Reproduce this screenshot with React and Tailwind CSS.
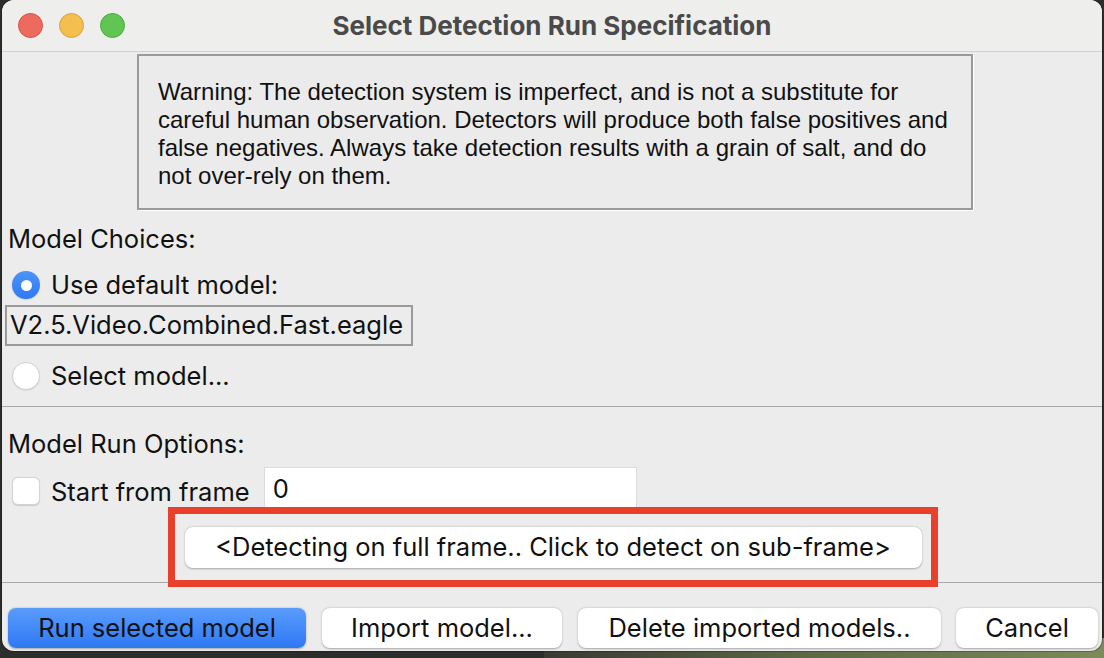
import React from "react";

const sf = { fontFamily: "Inter, 'Liberation Sans', sans-serif" };

function Radio({ checked }) {
  return checked ? (
    <div className="w-[28px] h-[28px] rounded-full bg-gradient-to-b from-[#4c93fb] to-[#2f79f4] flex items-center justify-center shadow-[0_0.5px_1px_rgba(0,0,0,0.25)]">
      <div className="w-[11px] h-[11px] rounded-full bg-white" />
    </div>
  ) : (
    <div className="w-[28px] h-[28px] rounded-full bg-white border border-[#d4d4d4] shadow-[0_0.5px_1px_rgba(0,0,0,0.15)]" />
  );
}

export default function App() {
  return (
    <div className="w-[1104px] h-[658px] bg-[#2c2e2b] overflow-hidden relative">
      <div className="absolute right-0 bottom-0 w-[560px] h-[20px] bg-gradient-to-r from-[#3b3a33] via-[#5d6b45] to-[#7d8a5a]" />
      <div
        className="relative ml-[2px] w-[1100px] h-[651px] bg-[#ececec] rounded-[12px] overflow-hidden flex flex-col shadow-[0_0_0_1px_rgba(0,0,0,0.25)]"
        style={sf}
      >
        {/* Title bar */}
        <div className="h-[52px] shrink-0 bg-[#eeeeec] border-b border-[#cfcfcf] flex items-center relative">
          <div className="flex items-center gap-[16px] pl-[16px]">
            <div className="w-[25px] h-[25px] rounded-full bg-[#ee6a5e] border border-[#d2544a]" />
            <div className="w-[25px] h-[25px] rounded-full bg-[#f5bf4f] border border-[#d8a23c]" />
            <div className="w-[25px] h-[25px] rounded-full bg-[#61c554] border border-[#4ea842]" />
          </div>
          <div className="absolute inset-0 flex items-center justify-center pointer-events-none">
            <span className="text-[26px] font-bold text-[#4a4a4a]">
              Select Detection Run Specification
            </span>
          </div>
        </div>

        {/* Warning box */}
        <div className="flex justify-start pl-[135px] pt-[2px]">
          <div className="w-[836px] h-[156px] border-2 border-[#9a9a9a] shadow-[1px_1px_0_0_#ffffff] bg-[#ebebeb] pl-[19px] pt-[22px]">
            <p
              className="text-[24px] leading-[28px] text-[#111] whitespace-nowrap"
              style={{ fontFamily: "'Liberation Sans', Arial, sans-serif" }}
            >
              Warning: The detection system is imperfect, and is not a substitute for
              <br />
              careful human observation. Detectors will produce both false positives and
              <br />
              false negatives. Always take detection results with a grain of salt, and do
              <br />
              not over-rely on them.
            </p>
          </div>
        </div>

        {/* Model choices */}
        <div className="pl-[6px] pt-[14px] text-[25.5px] text-[#111] leading-[30px]">Model Choices:</div>
        <div className="flex items-center gap-[11px] pl-[10px] mt-[16px] h-[30px]">
          <Radio checked />
          <span className="text-[25.5px] text-[#111]">Use default model:</span>
        </div>
        <div className="pl-[3px] mt-[5px]">
          <div className="w-[408px] h-[41px] border-2 border-[#9a9a9a] flex items-center pl-[3px] text-[25.5px] text-[#111] bg-[#ececec]">
            V2.5.Video.Combined.Fast.eagle
          </div>
        </div>
        <div className="flex items-center gap-[11px] pl-[10px] mt-[15px] h-[30px]">
          <Radio />
          <span className="text-[25.5px] text-[#111]">Select model...</span>
        </div>
        <div className="mt-[15px] h-[1px] bg-[#a8a8a8]" />

        {/* Model run options */}
        <div className="pl-[6px] pt-[22px] text-[25.5px] text-[#111] leading-[30px]">Model Run Options:</div>
        <div className="flex items-center mt-[8px] h-[44px]">
          <div className="ml-[10px] mt-[4px] w-[28px] h-[28px] rounded-[6px] bg-white border border-[#d4d4d4] shadow-[0_0.5px_1px_rgba(0,0,0,0.15)]" />
          <span className="ml-[11px] mt-[6px] text-[25.5px] text-[#111]">Start from frame</span>
          <div className="ml-[14px] w-[373px] h-[44px] bg-white border border-[#dcdcdc] flex items-center pl-[8px] text-[25.5px] text-[#111]">
            0
          </div>
        </div>

        {/* Sub-frame button area */}
        <div className="relative h-[74px] -mt-[4px]">
          <div className="absolute left-0 right-0 bottom-[-2px] h-[1px] bg-[#a8a8a8]" />
          <div className="absolute left-[166px] top-0 w-[770px] h-[80px] border-[7px] border-[#e8402a] flex items-center justify-center">
            <div className="w-[737px] h-[41px] bg-white rounded-[8px] shadow-[0_0.5px_2px_rgba(0,0,0,0.3)] flex items-center justify-center text-[25.5px] text-[#111]">
              &lt;Detecting on full frame.. Click to detect on sub-frame&gt;
            </div>
          </div>
        </div>

        {/* Bottom buttons */}
        <div className="flex items-center pl-[6px] mt-[27px] h-[40px] text-[25.5px] text-[#111]">
          <div className="w-[298px] h-[40px] rounded-[8px] bg-gradient-to-b from-[#5a9cfb] to-[#2f78f5] flex items-center justify-center shadow-[0_0.5px_2px_rgba(0,0,0,0.3)]">
            Run selected model
          </div>
          <div className="ml-[16px] w-[240px] h-[40px] rounded-[8px] bg-white flex items-center justify-center shadow-[0_0.5px_2px_rgba(0,0,0,0.3)]">
            Import model...
          </div>
          <div className="ml-[16px] w-[363px] h-[40px] rounded-[8px] bg-white flex items-center justify-center shadow-[0_0.5px_2px_rgba(0,0,0,0.3)]">
            Delete imported models..
          </div>
          <div className="ml-[15px] w-[142px] h-[40px] rounded-[8px] bg-white flex items-center justify-center shadow-[0_0.5px_2px_rgba(0,0,0,0.3)]">
            Cancel
          </div>
        </div>
      </div>
    </div>
  );
}
